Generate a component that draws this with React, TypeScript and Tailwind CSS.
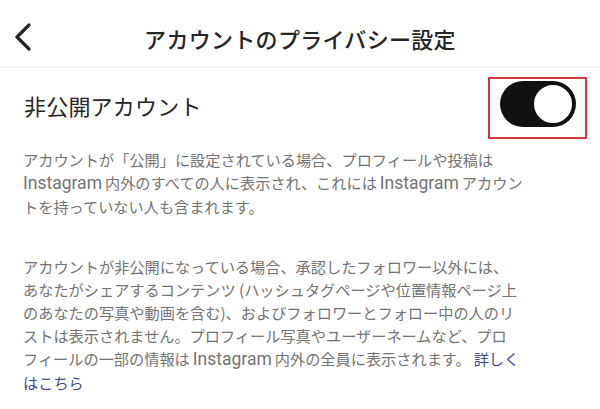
import React from "react";

const FONT = {
  fontFamily: '"Noto Sans CJK JP", "Noto Sans", sans-serif',
};

function IG() {
  return (
    <span className="mx-[3px] text-[17.5px] [font-family:Roboto,'Noto_Sans',sans-serif]">
      Instagram
    </span>
  );
}

export default function App() {
  return (
    <div
      className="w-[600px] h-[409px] bg-white overflow-hidden text-[#262626]"
      style={FONT}
    >
      {/* Header */}
      <div className="relative h-[68px] border-b border-[#efefef] flex items-center justify-center">
        <svg
          className="absolute left-[12px] top-[23px]"
          width="22"
          height="28"
          viewBox="0 0 22 28"
          fill="none"
        >
          <path
            d="M17 2 L5 14 L17 26"
            stroke="#262626"
            strokeWidth="3.2"
            strokeLinecap="round"
            strokeLinejoin="round"
          />
        </svg>
        <div className="text-[22px] leading-[30px] font-medium tracking-[0.3px] mt-[9px]">
          アカウントのプライバシー設定
        </div>
      </div>

      {/* Toggle row */}
      <div className="flex items-start justify-between pl-[24px] pr-[13px]">
        <div className="text-[22px] leading-[30px] mt-[22px] tracking-[0.2px]">
          非公開アカウント
        </div>
        <div className="mt-[9px] w-[99px] h-[62px] border-2 border-[#d2383e] pl-[10px] pt-[2px]">
          <div className="w-[76px] h-[46px] rounded-full bg-[#111] flex items-center justify-end pr-[2px]">
            <div className="w-[42px] h-[42px] rounded-full bg-white border-[2px] border-[#111]" />
          </div>
        </div>
      </div>

      {/* Paragraphs */}
      <div className="pl-[23px] text-[15.2px] leading-[23px] text-[#737373]">
        <p className="mt-[9px] whitespace-nowrap">
          アカウントが「公開」に設定されている場合、プロフィールや投稿は
          <br />
          <span className="-ml-[3px]">
            <IG />
          </span>
          内外のすべての人に表示され、これには
          <IG />
          アカウン
          <br />
          トを持っていない人も含まれます。
        </p>
        <p className="mt-[37px] whitespace-nowrap">
          アカウントが非公開になっている場合、承認したフォロワー以外には、
          <br />
          あなたがシェアするコンテンツ (ハッシュタグページや位置情報ページ上
          <br />
          のあなたの写真や動画を含む)、およびフォロワーとフォロー中の人のリ
          <br />
          ストは表示されません。プロフィール写真やユーザーネームなど、プロ
          <br />
          フィールの一部の情報は
          <IG />
          内外の全員に表示されます。
          <span className="ml-[3px] text-[#3b4b8c]">詳しく</span>
          <br />
          <span className="text-[#3b4b8c]">はこちら</span>
        </p>
      </div>
    </div>
  );
}
